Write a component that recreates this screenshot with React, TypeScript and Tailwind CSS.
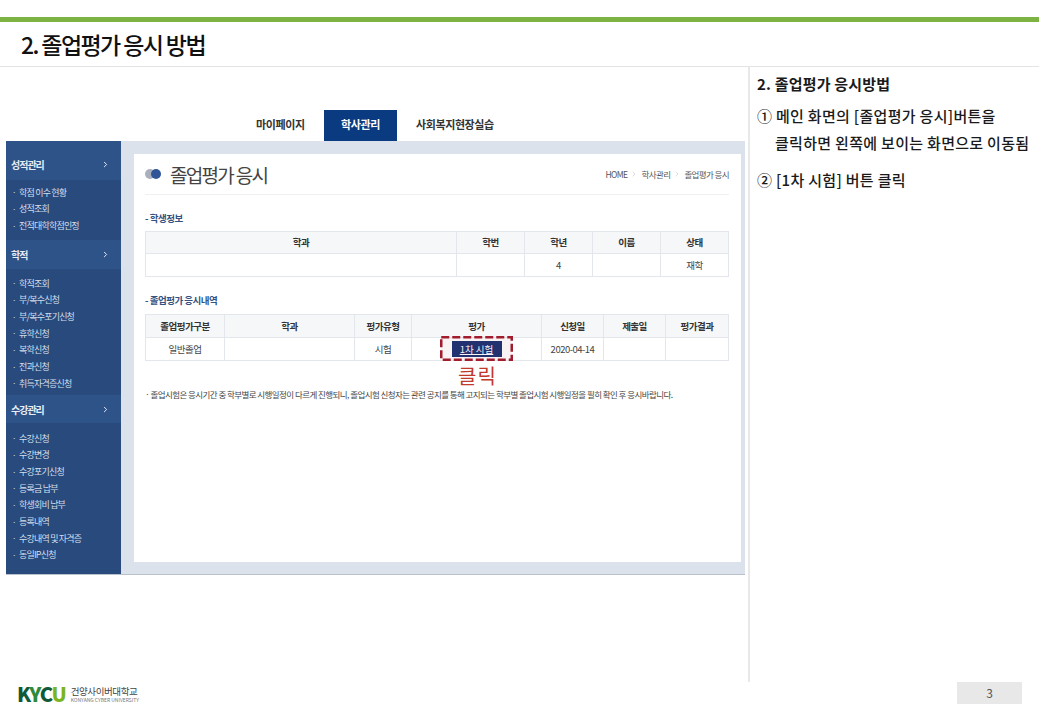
import { ChevronRight } from "lucide-react"

const menuGroups = [
  { title: "성적관리", headH: "h-[39px] pt-[7px]", listH: "h-[60px] pt-[4px]", items: ["학점 이수 현황", "성적조회", "전적대학학점인정"] },
  {
    title: "학적",
    headH: "h-[29px]",
    listH: "h-[126px] pt-[6px]",
    items: ["학적조회", "부/복수신청", "부/복수포기신청", "휴학신청", "복학신청", "전과신청", "취득자격증신청"],
  },
  {
    title: "수강관리",
    headH: "h-[28px]",
    listH: "h-[150px] pt-[7px]",
    items: ["수강신청", "수강변경", "수강포기신청", "등록금 납부", "학생회비 납부", "등록내역", "수강내역 및 자격증", "동일IP신청"],
  },
]

const studentHead = [
  { label: "학과", w: "w-[311px]" },
  { label: "학번", w: "w-[68px]" },
  { label: "학년", w: "w-[68px]" },
  { label: "이름", w: "w-[68px]" },
  { label: "상태", w: "w-[68px]" },
]

const examHead = [
  { label: "졸업평가구분", w: "w-[79px]" },
  { label: "학과", w: "w-[130px]" },
  { label: "평가유형", w: "w-[57px]" },
  { label: "평가", w: "w-[130px]" },
  { label: "신청일", w: "w-[62px]" },
  { label: "제출일", w: "w-[62px]" },
  { label: "평가결과", w: "w-[63px]" },
]

const thClass = "border border-[#e3e6ea] bg-[#f6f7f9] p-0 text-center text-[9.5px] font-bold tracking-[-0.5px] text-[#333]"
const tdClass = "border border-[#e3e6ea] p-0 text-center text-[9.5px] tracking-[-0.5px] text-[#444]"

function Sidebar() {
  return (
    <aside className="h-full w-[115px] shrink-0 bg-[#284a7d]">
      {menuGroups.map((group) => (
        <div key={group.title}>
          <div className={`flex items-center justify-between bg-[#2d5389] pl-[5px] pr-[11px] ${group.headH}`}>
            <span className="text-[10px] font-bold tracking-[-1px] text-[#e8edf5]">{group.title}</span>
            <ChevronRight size={9} strokeWidth={2.5} className="text-[#eef2f8]" />
          </div>
          <ul className={`flex flex-col ${group.listH}`}>
            {group.items.map((item) => (
              <li key={item} className="flex h-[16.7px] items-center pl-[6px] text-[9px] tracking-[-0.8px] text-[#d5deeb]">
                <span className="w-[7px] text-[8px]">·</span>
                {item}
              </li>
            ))}
          </ul>
        </div>
      ))}
    </aside>
  )
}

function StudentTable() {
  return (
    <table className="w-[583px] table-fixed border-collapse">
      <thead>
        <tr>
          {studentHead.map((col) => (
            <th key={col.label} className={`${thClass} h-[22px] ${col.w}`}>
              {col.label}
            </th>
          ))}
        </tr>
      </thead>
      <tbody>
        <tr className="h-[23px]">
          <td className={tdClass}></td>
          <td className={tdClass}></td>
          <td className={tdClass}>4</td>
          <td className={tdClass}></td>
          <td className={tdClass}>재학</td>
        </tr>
      </tbody>
    </table>
  )
}

function ExamTable() {
  return (
    <table className="w-[583px] table-fixed border-collapse">
      <thead>
        <tr>
          {examHead.map((col) => (
            <th key={col.label} className={`${thClass} h-[23px] ${col.w}`}>
              {col.label}
            </th>
          ))}
        </tr>
      </thead>
      <tbody>
        <tr className="h-[23px]">
          <td className={tdClass}>일반졸업</td>
          <td className={tdClass}></td>
          <td className={tdClass}>시험</td>
          <td className={`${tdClass} relative`}>
            <span className="inline-flex h-[16px] w-[50px] items-center justify-center bg-[#1c3374] text-[9.5px] tracking-normal text-white underline">
              1차 시험
            </span>
            {/* 빨간 점선 강조 박스 */}
            <svg className="absolute left-[28px] top-[-2px]" width="73" height="25" viewBox="0 0 73 25">
              <rect x="1.25" y="1.25" width="70.5" height="22.5" fill="#a11c2c" fillOpacity="0.05" stroke="#a11c2c" strokeWidth="2.5" strokeDasharray="8 3" />
            </svg>
            <div className="absolute left-[46px] top-[30px] font-['Liberation_Sans','Noto_Sans_CJK_KR',sans-serif] text-[20px] leading-[18px] tracking-[1px] text-[#c0392b]">
              클릭
            </div>
          </td>
          <td className={tdClass}>2020-04-14</td>
          <td className={tdClass}></td>
          <td className={tdClass}></td>
        </tr>
      </tbody>
    </table>
  )
}

function SectionTitle({ children }: { children: string }) {
  return <h3 className="text-[9.5px] font-bold leading-[14px] tracking-[-0.5px] text-[#33527f]">- {children}</h3>
}

function ScreenCapture() {
  return (
    <div className="ml-[6px] flex h-[434px] w-[739px] border-b border-[#b9c1cc]">
      <Sidebar />
      <div className="flex-1 bg-[#dbe2ec] pb-[12px] pl-[13px] pr-[4px] pt-[13px]">
        <div className="h-full bg-white px-[11px]">
          <div className="flex h-[41px] w-[584px] items-center justify-between border-b border-[#f0f0f0]">
            <div className="flex items-center">
              <span className="relative mr-[9px] block h-[11px] w-[16px]">
                <span className="absolute left-0 top-0 h-[10px] w-[10px] rounded-full bg-[#a9afbd]" />
                <span className="absolute left-[6px] top-0 h-[10px] w-[10px] rounded-full bg-[#2f5597]" />
              </span>
              <h2 className="text-[19px] leading-none tracking-[-1.7px] text-[#444]">졸업평가 응시</h2>
            </div>
            <div className="flex items-center text-[8.5px] tracking-[-0.6px] text-[#555]">
              <span>HOME</span>
              <ChevronRight size={8} className="mx-[3px] text-[#ccc]" />
              <span>학사관리</span>
              <ChevronRight size={8} className="mx-[3px] text-[#ccc]" />
              <span>졸업평가 응시</span>
            </div>
          </div>
          <div className="mt-[16px]">
            <SectionTitle>학생정보</SectionTitle>
          </div>
          <div className="mt-[6px]">
            <StudentTable />
          </div>
          <div className="mt-[16px]">
            <SectionTitle>졸업평가 응시내역</SectionTitle>
          </div>
          <div className="mt-[7px]">
            <ExamTable />
          </div>
          <p className="mt-[26px] text-[8.5px] leading-[14px] tracking-[-0.57px] text-[#444]">
            · 졸업시험은 응시기간 중 학부별로 시행일정이 다르게 진행되니, 졸업시험 신청자는 관련 공지를 통해 고지되는 학부별 졸업시험 시행일정을 필히 확인 후 응시바랍니다.
          </p>
        </div>
      </div>
    </div>
  )
}

export default function App() {
  return (
    <div className="flex h-[720px] w-[1039px] flex-col overflow-hidden bg-white pt-[17px] font-['Noto_Sans_CJK_KR','Liberation_Sans',sans-serif]">
      <div className="h-[5px] bg-[#7cb342]" />
      <header className="flex h-[45px] shrink-0 items-center border-b border-[#e4e4e4] pl-[21px]">
        <h1 className="text-[23px] font-medium tracking-[-1.6px] text-[#111]">2. 졸업평가 응시 방법</h1>
      </header>

      <div className="flex h-[615px] shrink-0">
        <section className="w-[750px] shrink-0 border-r-2 border-[#e8e8e8] pt-[43px]">
          <nav className="flex h-[31px] items-center pb-[3px] pl-[250px] text-[11px] font-bold tracking-[-0.4px] text-[#333]">
            <span className="w-[74px] pl-[6px]">마이페이지</span>
            <span className="-mb-[3px] flex h-[31px] w-[73px] items-center justify-center bg-[#0a3a80] pb-[3px] text-white">학사관리</span>
            <span className="ml-[19px]">사회복지현장실습</span>
          </nav>
          <ScreenCapture />
        </section>

        <section className="pl-[7px] pt-[6px] text-[15px] font-medium leading-[22px] text-[#1a1a1a]">
          <h2 className="font-bold tracking-[0.2px]">2. 졸업평가 응시방법</h2>
          <p className="mt-[10px] tracking-[0.3px]">① 메인 화면의 [졸업평가 응시]버튼을</p>
          <p className="mt-[5px] pl-[18px] tracking-[0.3px]">클릭하면 왼쪽에 보이는 화면으로 이동됨</p>
          <p className="mt-[15px] tracking-[0.3px]">② [1차 시험] 버튼 클릭</p>
        </section>
      </div>

      <footer className="flex flex-1 items-start justify-between pl-[17px] pr-[17px]">
        <div className="mt-[2px] flex items-center">
          <span className="text-[20px] font-black leading-[20px] tracking-[-1.2px]">
            <span className="text-[#0f5a3a]">K</span>
            <span className="text-[#2e8b3a]">Y</span>
            <span className="text-[#0f5a3a]">C</span>
            <span className="text-[#7ab51d]">U</span>
          </span>
          <div className="ml-[5px] flex flex-col">
            <span className="text-[9.5px] leading-[10px] tracking-[-0.4px] text-[#444]">건양사이버대학교</span>
            <span className="mt-[1px] text-[5px] leading-[6px] text-[#777]">KONYANG CYBER UNIVERSITY</span>
          </div>
        </div>
        <div className="flex h-[22px] w-[65px] items-center justify-center bg-[#e8e8e8] text-[12px] text-[#555]">3</div>
      </footer>
    </div>
  )
}
